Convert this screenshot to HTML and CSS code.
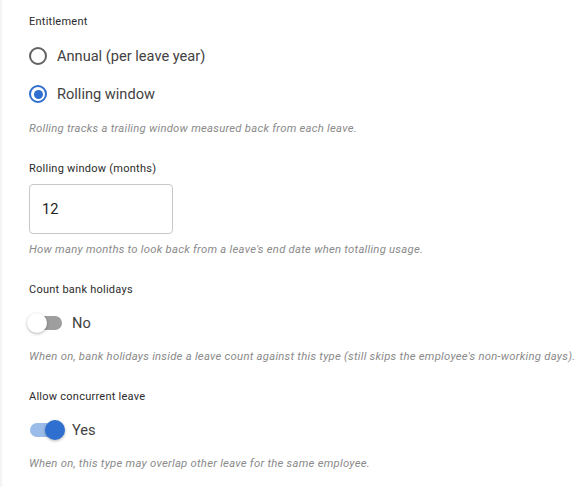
FILE: index.html
```html
<!DOCTYPE html>
<html lang="en">
<head>
    <meta charset="UTF-8">
    <meta name="viewport" content="width=device-width, initial-scale=1.0">
    <title>Leave type settings</title>
    <link rel="stylesheet" href="styles.css">
</head>
<body>
    <div class="card">
        <!-- Entitlement -->
        <div class="field">
            <div class="field-label">Entitlement</div>
            <label class="radio-row">
                <span class="radio"></span>
                <span class="option-text">Annual (per leave year)</span>
            </label>
            <label class="radio-row">
                <span class="radio checked"></span>
                <span class="option-text">Rolling window</span>
            </label>
            <div class="help">Rolling tracks a trailing window measured back from each leave.</div>
        </div>

        <!-- Rolling window -->
        <div class="field">
            <div class="field-label">Rolling window (months)</div>
            <div class="text-input">12</div>
            <div class="help">How many months to look back from a leave's end date when totalling usage.</div>
        </div>

        <!-- Bank holidays -->
        <div class="field">
            <div class="field-label">Count bank holidays</div>
            <label class="switch-row">
                <span class="switch"><span class="thumb"></span></span>
                <span class="option-text">No</span>
            </label>
            <div class="help">When on, bank holidays inside a leave count against this type (still skips the employee's non-working days).</div>
        </div>

        <!-- Concurrent leave -->
        <div class="field">
            <div class="field-label">Allow concurrent leave</div>
            <label class="switch-row">
                <span class="switch on"><span class="thumb"></span></span>
                <span class="option-text">Yes</span>
            </label>
            <div class="help">When on, this type may overlap other leave for the same employee.</div>
        </div>
    </div>
</body>
</html>
```

FILE: styles.css
```css
/* base */
body {
    margin: 0;
    background-color: #f4f4f4;
    font-family: Roboto, "Liberation Sans", sans-serif;
    color: #333;
}

.card {
    margin-left: 2px;
    min-height: 487px;
    background: #fff;
    padding: 14px 0 0 27px;
    box-sizing: border-box;
}

/* fields */
.field {
    margin-bottom: 24px;
}

.field-label {
    font-size: 11px;
    line-height: 16px;
    color: #2b2b2b;
    letter-spacing: 0.25px;
    margin-bottom: 7px;
}

.help {
    font-size: 11.3px;
    line-height: 16px;
    font-style: italic;
    color: #8a8a8a;
    letter-spacing: 0.25px;
    margin-top: 8px;
}

.option-text {
    font-size: 14.6px;
    color: #424242;
}

/* radios */
.radio-row {
    display: flex;
    align-items: center;
    height: 38px;
}

.radio {
    width: 18px;
    height: 18px;
    box-sizing: border-box;
    border: 2px solid #616161;
    border-radius: 50%;
    margin-right: 10px;
    display: flex;
    align-items: center;
    justify-content: center;
}

.radio.checked {
    border-color: #2f6fd0;
}

.radio.checked::after {
    content: "";
    width: 9px;
    height: 9px;
    border-radius: 50%;
    background: #2f6fd0;
}

/* number input */
.text-input {
    width: 144px;
    height: 50px;
    box-sizing: border-box;
    border: 1px solid #c8c8c8;
    border-radius: 4px;
    padding: 0 12px;
    display: flex;
    align-items: center;
    font-size: 14.6px;
    color: #222;
    margin-top: 2px;
}

/* switches */
.switch-row {
    display: flex;
    align-items: center;
    height: 36px;
}

.switch {
    position: relative;
    width: 32px;
    height: 14px;
    margin-left: 1px;
    border-radius: 7px;
    background: #9e9e9e;
    margin-right: 10px;
}

.switch .thumb {
    position: absolute;
    top: -3px;
    left: -3px;
    width: 20px;
    height: 20px;
    border-radius: 50%;
    background: #fff;
    box-shadow: 0 1px 3px rgba(0, 0, 0, 0.3);
}

.switch.on {
    background: #9bbbe9;
}

.switch.on .thumb {
    left: 15px;
    background: #2f6fd0;
}
```
